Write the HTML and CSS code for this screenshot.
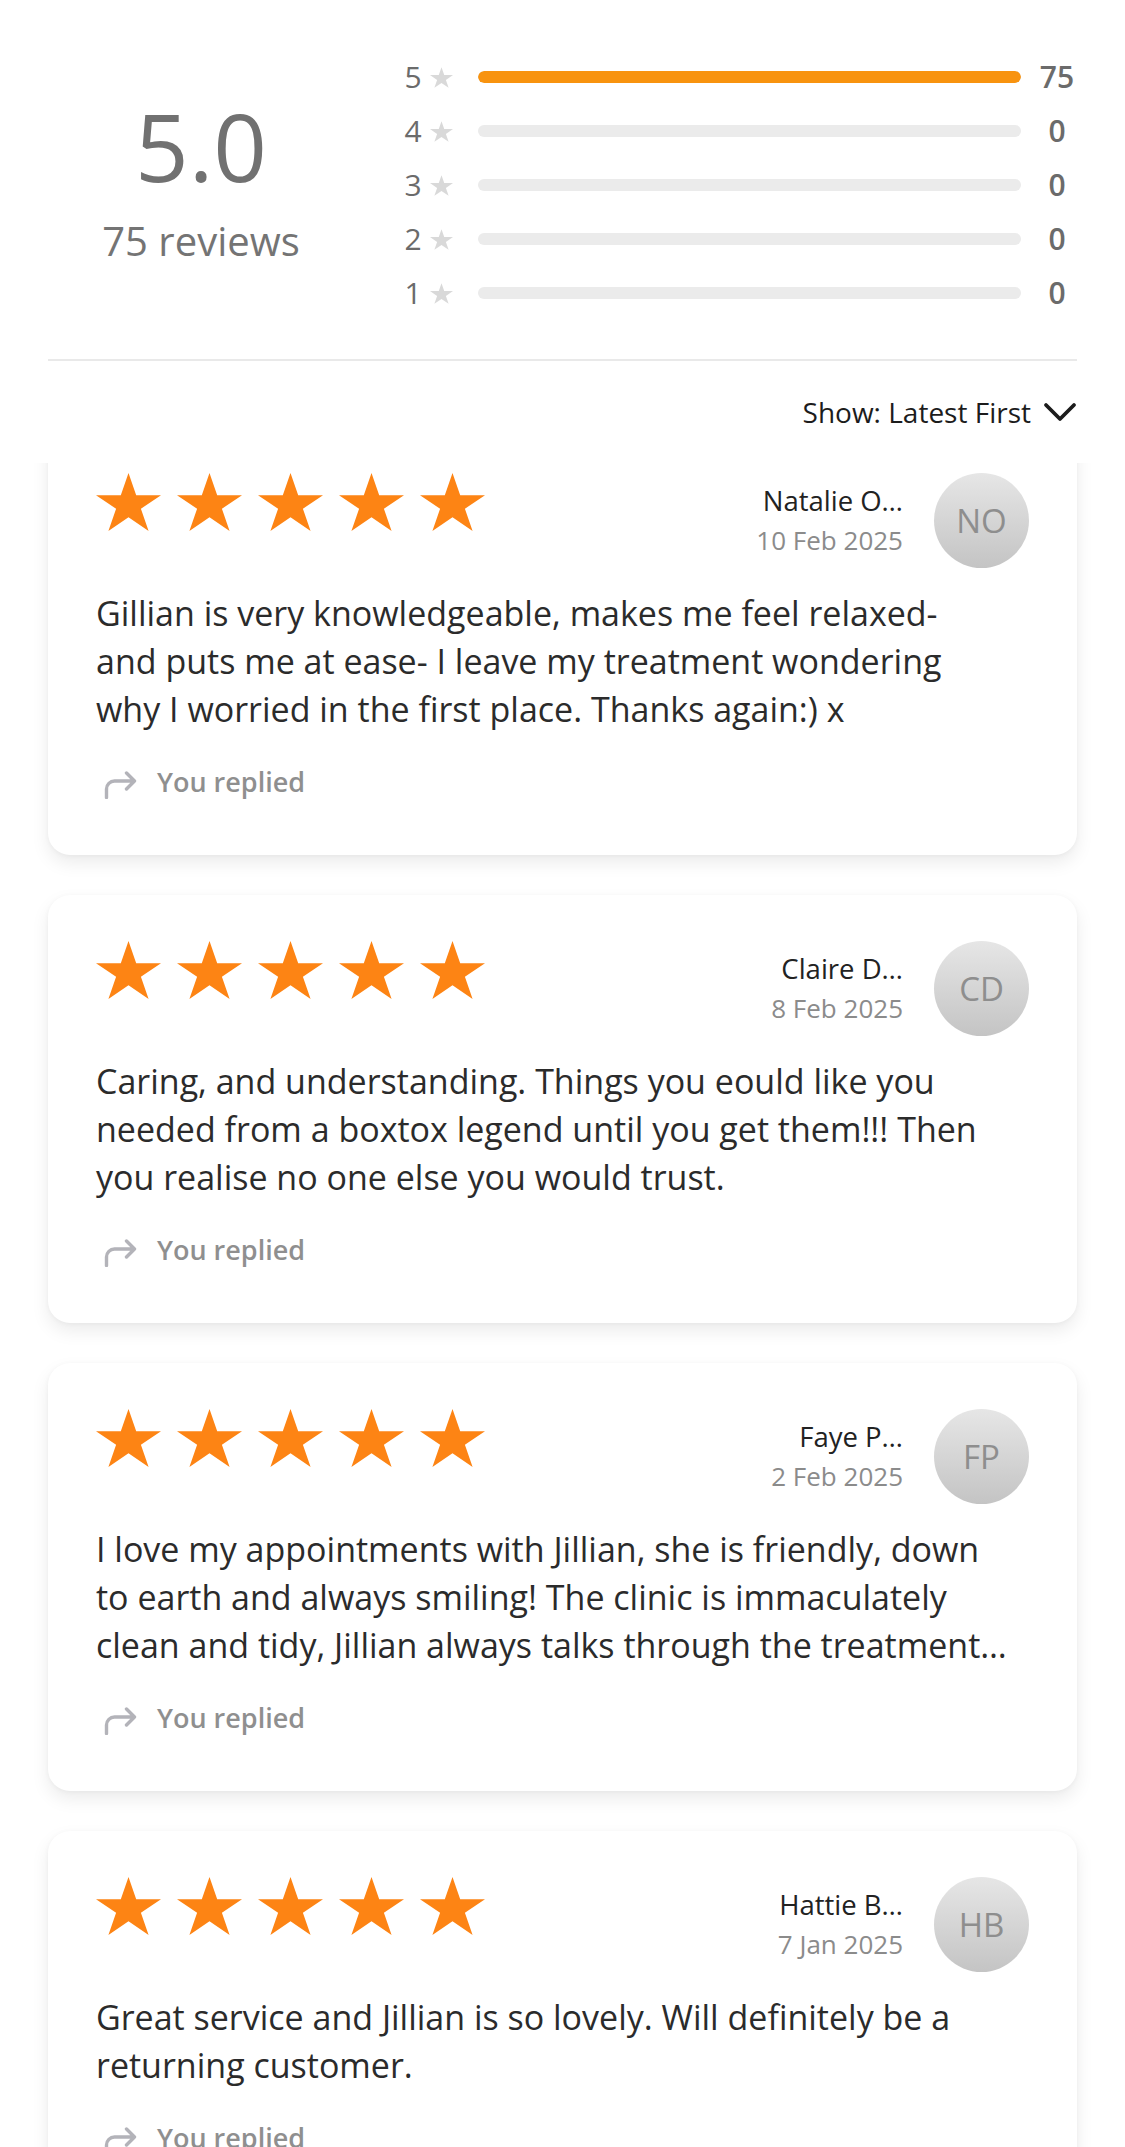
FILE: index.html
```html
<!DOCTYPE html>
<html lang="en">
<head>
<meta charset="utf-8">
<title>Reviews</title>
<link rel="stylesheet" href="styles.css">
</head>
<body>
<svg class="sprite" aria-hidden="true">
  <symbol id="star" viewBox="0 0 65 58">
    <polygon points="32.5,0 40.2,22.2 65,22.2 44.9,35.8 52.6,58 32.5,44.3 12.4,58 20.1,35.8 0,22.2 24.8,22.2"/>
  </symbol>
  <symbol id="reply" viewBox="0 0 33 28">
    <path d="M2.5 26.5 V18 a8 8 0 0 1 8 -8 H30.5 M22.5 2 L30.5 10 L22.5 18" fill="none" stroke-width="3.4" stroke-linecap="round" stroke-linejoin="round"/>
  </symbol>
</svg>

<header class="top">
  <section class="summary">
    <div class="score">
      <div class="score-value">5.0</div>
      <div class="score-count">75 reviews</div>
    </div>
    <div class="breakdown">
      <div class="row"><span class="row-num">5</span><svg class="row-star"><use href="#star"/></svg><div class="bar"><div class="bar-fill" style="width:100%"></div></div><span class="row-count">75</span></div>
      <div class="row"><span class="row-num">4</span><svg class="row-star"><use href="#star"/></svg><div class="bar"><div class="bar-fill" style="width:0%"></div></div><span class="row-count">0</span></div>
      <div class="row"><span class="row-num">3</span><svg class="row-star"><use href="#star"/></svg><div class="bar"><div class="bar-fill" style="width:0%"></div></div><span class="row-count">0</span></div>
      <div class="row"><span class="row-num">2</span><svg class="row-star"><use href="#star"/></svg><div class="bar"><div class="bar-fill" style="width:0%"></div></div><span class="row-count">0</span></div>
      <div class="row"><span class="row-num">1</span><svg class="row-star"><use href="#star"/></svg><div class="bar"><div class="bar-fill" style="width:0%"></div></div><span class="row-count">0</span></div>
    </div>
  </section>
  <div class="divider"></div>
  <div class="sort">
    <span>Show: Latest First</span>
    <svg class="chevron" viewBox="0 0 34 20"><polyline points="3,3 17,17 31,3"/></svg>
  </div>
</header>

<main class="feed">
  <div class="feed-list">

    <article class="card">
      <div class="card-head">
        <div class="stars">
          <svg><use href="#star"/></svg><svg><use href="#star"/></svg><svg><use href="#star"/></svg><svg><use href="#star"/></svg><svg><use href="#star"/></svg>
        </div>
        <div class="author">
          <div class="author-text">
            <div class="author-name">Natalie O…</div>
            <div class="author-date">10 Feb 2025</div>
          </div>
          <div class="avatar">NO</div>
        </div>
      </div>
      <p class="review-text">Gillian is very knowledgeable, makes me feel relaxed-<br>and puts me at ease- I leave my treatment wondering<br>why I worried in the first place. Thanks again:) x</p>
      <div class="reply"><svg><use href="#reply"/></svg><span>You replied</span></div>
    </article>

    <article class="card">
      <div class="card-head">
        <div class="stars">
          <svg><use href="#star"/></svg><svg><use href="#star"/></svg><svg><use href="#star"/></svg><svg><use href="#star"/></svg><svg><use href="#star"/></svg>
        </div>
        <div class="author">
          <div class="author-text">
            <div class="author-name">Claire D…</div>
            <div class="author-date">8 Feb 2025</div>
          </div>
          <div class="avatar">CD</div>
        </div>
      </div>
      <p class="review-text">Caring, and understanding. Things you eould like you<br>needed from a boxtox legend until you get them!!! Then<br>you realise no one else you would trust.</p>
      <div class="reply"><svg><use href="#reply"/></svg><span>You replied</span></div>
    </article>

    <article class="card">
      <div class="card-head">
        <div class="stars">
          <svg><use href="#star"/></svg><svg><use href="#star"/></svg><svg><use href="#star"/></svg><svg><use href="#star"/></svg><svg><use href="#star"/></svg>
        </div>
        <div class="author">
          <div class="author-text">
            <div class="author-name">Faye P…</div>
            <div class="author-date">2 Feb 2025</div>
          </div>
          <div class="avatar">FP</div>
        </div>
      </div>
      <p class="review-text">I love my appointments with Jillian, she is friendly, down<br>to earth and always smiling! The clinic is immaculately<br>clean and tidy, Jillian always talks through the treatment…</p>
      <div class="reply"><svg><use href="#reply"/></svg><span>You replied</span></div>
    </article>

    <article class="card">
      <div class="card-head">
        <div class="stars">
          <svg><use href="#star"/></svg><svg><use href="#star"/></svg><svg><use href="#star"/></svg><svg><use href="#star"/></svg><svg><use href="#star"/></svg>
        </div>
        <div class="author">
          <div class="author-text">
            <div class="author-name">Hattie B…</div>
            <div class="author-date">7 Jan 2025</div>
          </div>
          <div class="avatar">HB</div>
        </div>
      </div>
      <p class="review-text">Great service and Jillian is so lovely. Will definitely be a<br>returning customer.</p>
      <div class="reply"><svg><use href="#reply"/></svg><span>You replied</span></div>
    </article>

  </div>
</main>
</body>
</html>
```

FILE: styles.css
```css
html, body {
  margin: 0;
  padding: 0;
  background: #ffffff;
}

body {
  font-family: "Open Sans", "Noto Sans", sans-serif;
  color: #2b2b2b;
}

.sprite {
  position: absolute;
  width: 0;
  height: 0;
  overflow: hidden;
}

/* ---------- header / summary ---------- */
.top {
  padding: 0 48px;
  background: #ffffff;
}

.summary {
  display: flex;
  align-items: center;
  gap: 50px;
  padding-top: 50px;
}

.score {
  width: 306px;
  flex: none;
  text-align: center;
  padding-bottom: 7px;
}

.score-value {
  font-size: 94px;
  line-height: 94px;
  color: #717171;
  margin-bottom: 24px;
}

.score-count {
  font-size: 40px;
  line-height: 48px;
  color: #747474;
}

.breakdown {
  flex: 1;
  display: flex;
  flex-direction: column;
}

.row {
  display: flex;
  align-items: center;
  height: 54px;
}

.row-num {
  width: 18px;
  text-align: center;
  font-size: 30px;
  line-height: 40px;
  color: #6b6b6b;
}

.row-star {
  width: 23px;
  height: 21px;
  margin-left: 8px;
  fill: #d9d9d9;
}

.bar {
  flex: 1;
  height: 12px;
  margin-left: 25px;
  border-radius: 6px;
  background: #ebebeb;
  overflow: hidden;
}

.bar-fill {
  height: 100%;
  border-radius: 6px;
  background: #f8930f;
}

.row-count {
  width: 40px;
  margin-left: 16px;
  text-align: center;
  font-size: 30px;
  line-height: 40px;
  font-weight: 600;
  color: #6b6b6b;
}

.divider {
  height: 2px;
  margin-top: 39px;
  background: #e9e9e9;
}

.sort {
  display: flex;
  justify-content: flex-end;
  align-items: center;
  gap: 12px;
  padding: 31px 0;
  font-size: 28px;
  line-height: 40px;
  color: #1c1c1c;
}

.chevron {
  width: 34px;
  height: 20px;
  fill: none;
  stroke: #1c1c1c;
  stroke-width: 3.8;
  stroke-linecap: round;
  stroke-linejoin: round;
}

/* ---------- review feed ---------- */
.feed {
  height: 1684px;
  overflow: hidden;
}

.feed-list {
  display: flex;
  flex-direction: column;
  gap: 40px;
  padding: 0 48px 40px;
  margin-top: -36px;
}

.card {
  background: #ffffff;
  border-radius: 22px;
  padding: 46px 48px 53px;
  box-shadow: 0 8px 18px rgba(0, 0, 0, 0.08), 0 1px 5px rgba(0, 0, 0, 0.04);
}

.card-head {
  display: flex;
  justify-content: space-between;
  align-items: flex-start;
}

.stars {
  display: flex;
  gap: 16px;
}

.stars svg {
  width: 65px;
  height: 58px;
  fill: #fd8414;
}

.author {
  display: flex;
  align-items: flex-start;
  gap: 31px;
}

.author-text {
  text-align: right;
  padding-top: 10px;
}

.author-name {
  font-size: 27.5px;
  line-height: 36px;
  color: #222222;
}

.author-date {
  margin-top: 3px;
  font-size: 26px;
  line-height: 36px;
  color: #8b8b8b;
}

.avatar {
  width: 95px;
  height: 95px;
  border-radius: 50%;
  background: linear-gradient(180deg, #e6e6e6 0%, #c4c4c4 100%);
  display: flex;
  align-items: center;
  justify-content: center;
  font-size: 33px;
  color: #8e8e8e;
}

.review-text {
  margin: 21px 0 0;
  font-size: 34px;
  line-height: 48px;
  color: #2b2b2b;
}

.reply {
  display: flex;
  align-items: center;
  margin-top: 29px;
  font-size: 27px;
  line-height: 40px;
  font-weight: 600;
  color: #8f8f8f;
}

.reply svg {
  width: 33px;
  height: 28px;
  margin: 6px 20px 0 8px;
  stroke: #b3b3b9;
}
```
